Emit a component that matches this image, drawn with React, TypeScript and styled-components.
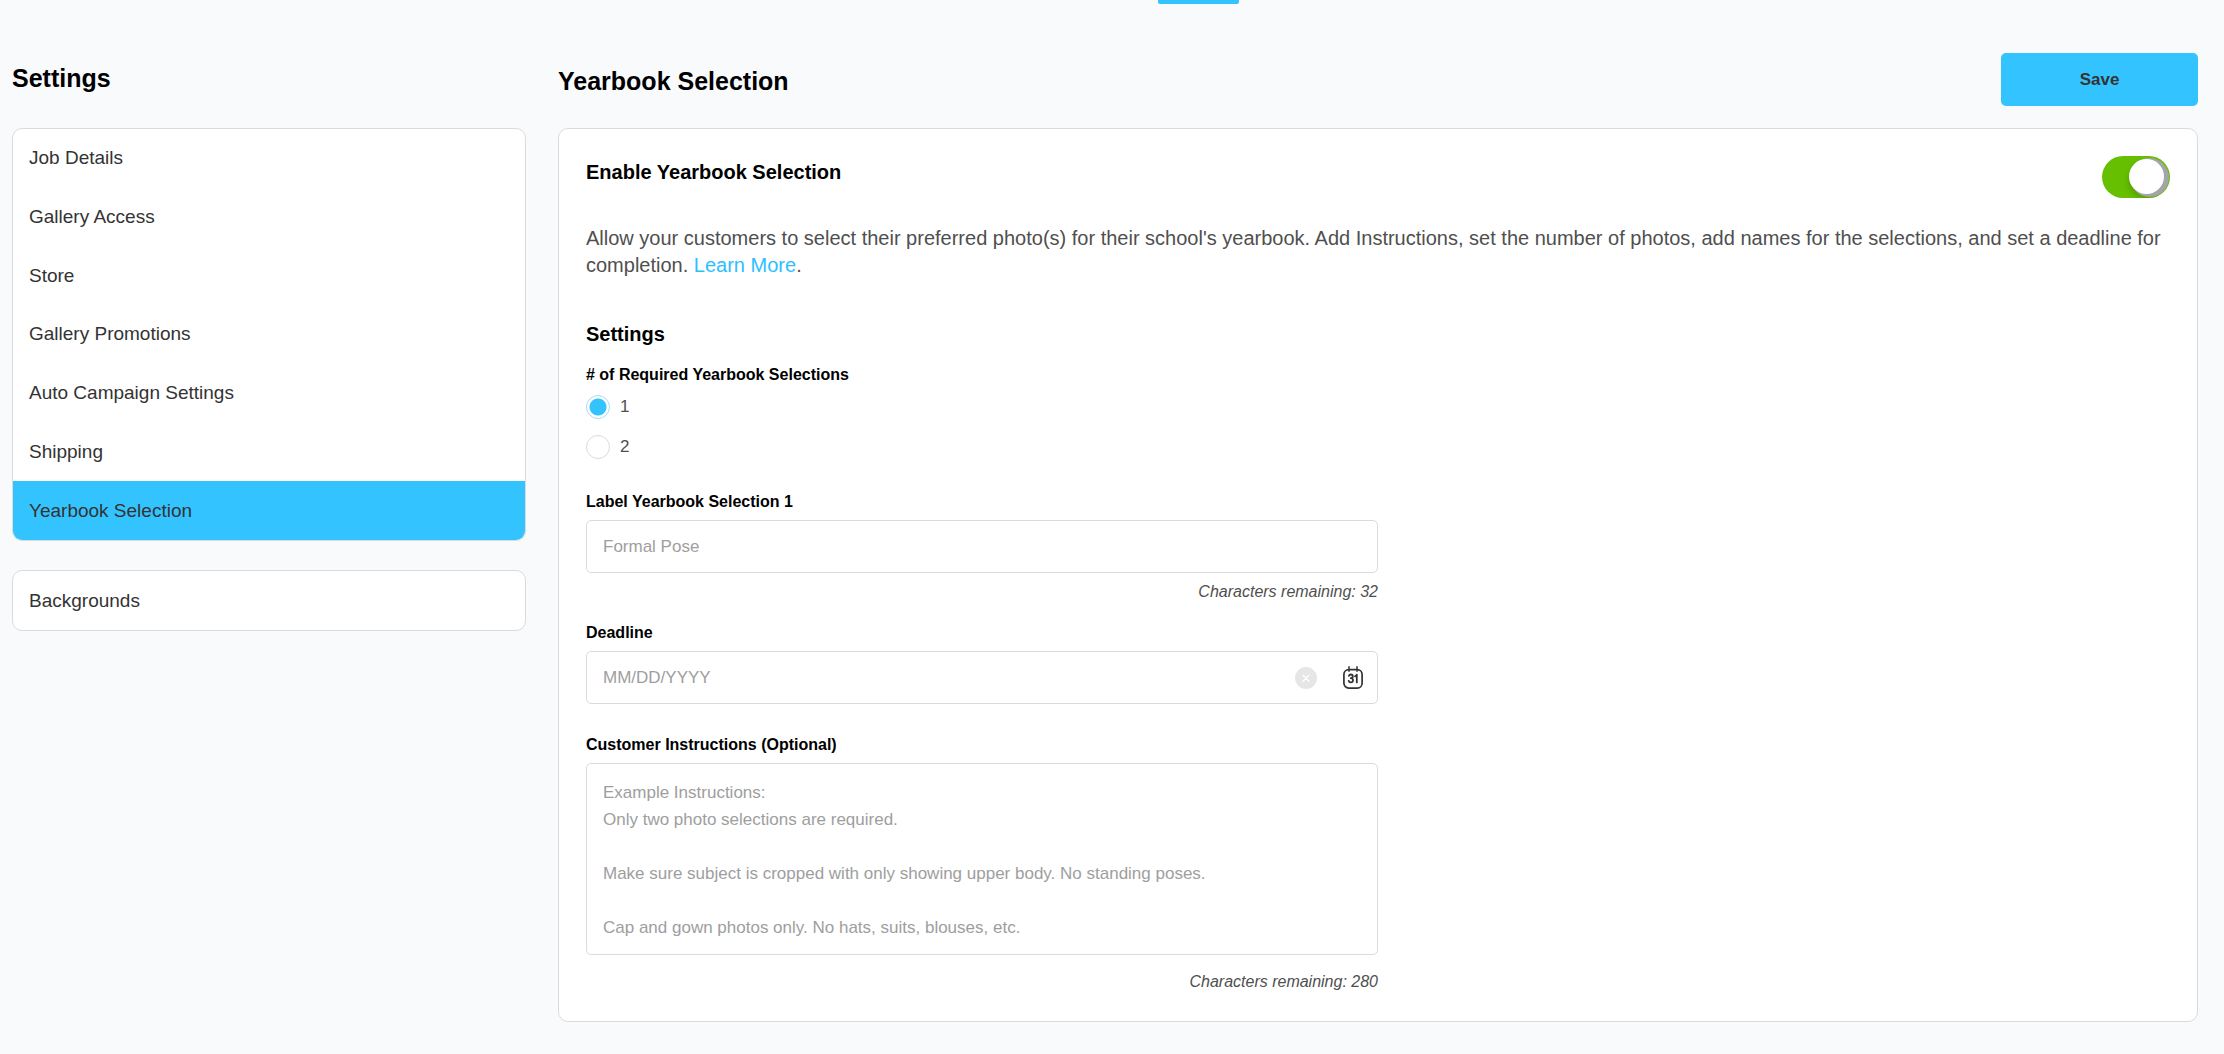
import React, { useState } from 'react';
import styled, { createGlobalStyle } from 'styled-components';

const color = {
  page: '#f9fafc',
  surface: '#ffffff',
  border: '#d9dbdd',
  accent: '#33c4ff',
  ink: '#000000',
  text: '#333333',
  body: '#4f4f4f',
  muted: '#9e9e9e',
  on: '#66bf00',
};

const GlobalStyle = createGlobalStyle`
  *, *::before, *::after { box-sizing: border-box; }
  body {
    margin: 0;
    background: ${color.page};
    color: ${color.text};
    font-family: "Liberation Sans", Arial, Helvetica, sans-serif;
    font-size: 16px;
    line-height: 24px;
  }
  button, input, textarea { font: inherit; color: inherit; }
  h1, h2, h3, p, ul, fieldset, legend { margin: 0; padding: 0; }
`;

const TabStrip = styled.div`
  height: 4px;
  padding-left: calc(50% + 46px);
`;

const ActiveTab = styled.div`
  width: 81px;
  height: 4px;
  border-radius: 0 0 2px 2px;
  background: ${color.accent};
`;

const Page = styled.div`
  display: grid;
  grid-template-columns: minmax(0, 257fr) minmax(0, 820fr);
  column-gap: 32px;
  align-items: start;
  padding: 49px 26px 32px 12px;
`;

const Header = styled.header`
  display: flex;
  align-items: flex-start;
  justify-content: space-between;
  height: 75px;
`;

const Title = styled.h1<{ $line: number }>`
  font-size: 25px;
  line-height: ${(p) => p.$line}px;
  font-weight: 700;
  color: ${color.ink};
`;

const SaveButton = styled.button`
  width: 197px;
  height: 53px;
  border: 0;
  border-radius: 5px;
  background: ${color.accent};
  font-size: 17px;
  font-weight: 700;
  cursor: pointer;
`;

const NavGroups = styled.nav`
  display: grid;
  gap: 29px;
`;

const NavList = styled.ul<{ $min?: number }>`
  display: grid;
  grid-auto-rows: 1fr;
  min-height: ${(p) => p.$min ?? 61}px;
  list-style: none;
  overflow: hidden;
  border: 1px solid ${color.border};
  border-radius: 10px;
  background: ${color.surface};
`;

const NavLink = styled.a<{ $active?: boolean }>`
  display: flex;
  align-items: center;
  height: 100%;
  padding: 0 16px;
  font-size: 19px;
  color: ${color.text};
  text-decoration: none;
  background: ${(p) => (p.$active ? color.accent : 'transparent')};
`;

const Card = styled.section`
  padding: 27px;
  border: 1px solid ${color.border};
  border-radius: 10px;
  background: ${color.surface};
`;

const EnableRow = styled.div`
  display: flex;
  align-items: flex-start;
  justify-content: space-between;
`;

const SectionTitle = styled.h2`
  font-size: 20px;
  line-height: 32px;
  font-weight: 700;
  color: ${color.ink};
`;

const Toggle = styled.input`
  appearance: none;
  display: flex;
  align-items: flex-start;
  width: 68px;
  height: 42px;
  margin: 0;
  padding: 3px;
  overflow: hidden;
  border-radius: 21px;
  background: #b5b5b5;
  cursor: pointer;

  &::before {
    content: '';
    width: 35px;
    height: 35px;
    border-radius: 50%;
    background: #fff;
    box-shadow: 3px 1px 0 2px #a3a5a6, 0 4px 6px rgba(0, 0, 0, 0.2);
  }

  &:checked {
    background: ${color.on};
  }

  &:checked::before {
    margin-left: 24px;
  }
`;

const Intro = styled.p`
  margin: 27px 0 39px;
  font-size: 20px;
  line-height: 27px;
  color: ${color.body};
`;

const InlineLink = styled.a`
  color: #2cc0ff;
  text-decoration: none;
`;

const Form = styled.form`
  width: 50%;
`;

const Choices = styled.fieldset`
  min-width: 0;
  margin-top: 13px;
  border: 0;
`;

const Legend = styled.legend`
  margin-bottom: 8px;
  font-weight: 700;
  color: ${color.ink};
`;

const ChoiceList = styled.div`
  display: grid;
  gap: 16px;
`;

const Choice = styled.label`
  display: flex;
  align-items: center;
  gap: 10px;
  font-size: 17px;
  color: ${color.body};
`;

const Radio = styled.input`
  appearance: none;
  width: 24px;
  height: 24px;
  margin: 0;
  border: 1px solid ${color.border};
  border-radius: 50%;
  background: #fff;

  &:checked {
    border-color: #a5dcf5;
    background: radial-gradient(circle, ${color.accent} 8px, #fff 9px);
  }
`;

const Field = styled.div<{ $gap: number }>`
  display: flex;
  flex-direction: column;
  margin-top: ${(p) => p.$gap}px;
`;

const FieldLabel = styled.label`
  margin-bottom: 6px;
  font-weight: 700;
  color: ${color.ink};
`;

const Control = styled.div`
  display: flex;
  align-items: center;
  height: 53px;
  padding-right: 14px;
  border: 1px solid ${color.border};
  border-radius: 5px;
  background: #fff;
`;

const TextInput = styled.input`
  flex: 1;
  min-width: 0;
  height: 100%;
  padding: 0 16px;
  border: 0;
  outline: 0;
  background: transparent;
  font-size: 17px;

  &::placeholder { color: ${color.muted}; opacity: 1; }
`;

const TextArea = styled.textarea`
  display: block;
  height: 192px;
  padding: 15px 16px;
  border: 1px solid ${color.border};
  border-radius: 5px;
  outline: 0;
  resize: none;
  overflow: hidden;
  background: #fff;
  font-size: 17px;
  line-height: 27px;

  &::placeholder { color: ${color.muted}; opacity: 1; }
`;

const Remaining = styled.p<{ $gap: number }>`
  margin-top: ${(p) => p.$gap}px;
  text-align: right;
  font-style: italic;
  color: ${color.body};
`;

const IconButton = styled.button`
  display: flex;
  padding: 0;
  border: 0;
  background: none;
  cursor: pointer;
`;

const IconGroup = styled.div`
  display: flex;
  align-items: center;
  gap: 26px;
`;

const ClearIcon = () => (
  <svg width="22" height="22" viewBox="0 0 22 22" aria-hidden="true">
    <circle cx="11" cy="11" r="11" fill="#e6e6e6" />
    <path d="M8 8.2l6 6M14 8.2l-6 6" stroke="#fff" strokeWidth="1.3" strokeLinecap="round" />
  </svg>
);

const CalendarIcon = () => (
  <svg width="20" height="23" viewBox="0 0 20 23" fill="none" stroke="#333" strokeLinecap="round" strokeLinejoin="round" aria-hidden="true">
    <rect x="0.9" y="3.6" width="18.2" height="18.5" rx="4.8" strokeWidth="1.7" />
    <path d="M6 0.8v4.4M14 0.8v4.4" strokeWidth="1.5" />
    <path d="M5.9 9.9c.3-.9 1-1.4 1.9-1.4 1.2 0 2 .7 2 1.8s-.8 1.9-2 1.9c1.3 0 2.2.8 2.2 2.1s-.9 2.1-2.2 2.1c-1.1 0-1.9-.6-2.1-1.6" strokeWidth="1.8" />
    <path d="M12 10.3c.9-.2 1.5-.8 1.8-1.7V16.4" strokeWidth="1.8" />
  </svg>
);

const navItems = [
  'Job Details',
  'Gallery Access',
  'Store',
  'Gallery Promotions',
  'Auto Campaign Settings',
  'Shipping',
  'Yearbook Selection',
];

const instructions = [
  'Example Instructions:',
  'Only two photo selections are required.',
  '',
  'Make sure subject is cropped with only showing upper body. No standing poses.',
  '',
  'Cap and gown photos only. No hats, suits, blouses, etc.',
].join('\n');

export default function App() {
  const [enabled, setEnabled] = useState(true);
  const [count, setCount] = useState(1);
  const [label, setLabel] = useState('');
  const [deadline, setDeadline] = useState('');
  const [notes, setNotes] = useState('');

  return (
    <>
      <GlobalStyle />
      <TabStrip>
        <ActiveTab />
      </TabStrip>
      <Page>
        <aside>
          <Header>
            <Title $line={50}>Settings</Title>
          </Header>
          <NavGroups aria-label="Settings">
            <NavList $min={413}>
              {navItems.map((item) => (
                <li key={item}>
                  <NavLink href="#" $active={item === 'Yearbook Selection'}>
                    {item}
                  </NavLink>
                </li>
              ))}
            </NavList>
            <NavList>
              <li>
                <NavLink href="#">Backgrounds</NavLink>
              </li>
            </NavList>
          </NavGroups>
        </aside>

        <main>
          <Header>
            <Title $line={56}>Yearbook Selection</Title>
            <SaveButton type="submit" form="yearbook">Save</SaveButton>
          </Header>
          <Card>
            <EnableRow>
              <SectionTitle as="label" htmlFor="enable">Enable Yearbook Selection</SectionTitle>
              <Toggle
                id="enable"
                type="checkbox"
                role="switch"
                checked={enabled}
                onChange={(e) => setEnabled(e.target.checked)}
              />
            </EnableRow>
            <Intro>
              Allow your customers to select their preferred photo(s) for their school's yearbook. Add Instructions,
              set the number of photos, add names for the selections, and set a deadline for completion.{' '}
              <InlineLink href="#">Learn More</InlineLink>.
            </Intro>

            <Form id="yearbook" onSubmit={(e) => e.preventDefault()}>
              <SectionTitle>Settings</SectionTitle>
              <Choices>
                <Legend># of Required Yearbook Selections</Legend>
                <ChoiceList>
                  {[1, 2].map((n) => (
                    <Choice key={n}>
                      <Radio type="radio" name="count" checked={count === n} onChange={() => setCount(n)} />
                      {n}
                    </Choice>
                  ))}
                </ChoiceList>
              </Choices>

              <Field $gap={31}>
                <FieldLabel htmlFor="label">Label Yearbook Selection 1</FieldLabel>
                <Control>
                  <TextInput
                    id="label"
                    maxLength={32}
                    placeholder="Formal Pose"
                    value={label}
                    onChange={(e) => setLabel(e.target.value)}
                  />
                </Control>
                <Remaining $gap={7}>Characters remaining: {32 - label.length}</Remaining>
              </Field>

              <Field $gap={17}>
                <FieldLabel htmlFor="deadline">Deadline</FieldLabel>
                <Control>
                  <TextInput
                    id="deadline"
                    placeholder="MM/DD/YYYY"
                    value={deadline}
                    onChange={(e) => setDeadline(e.target.value)}
                  />
                  <IconGroup>
                    <IconButton type="button" aria-label="Clear deadline" onClick={() => setDeadline('')}>
                      <ClearIcon />
                    </IconButton>
                    <IconButton type="button" aria-label="Open calendar">
                      <CalendarIcon />
                    </IconButton>
                  </IconGroup>
                </Control>
              </Field>

              <Field $gap={29}>
                <FieldLabel htmlFor="notes">Customer Instructions (Optional)</FieldLabel>
                <TextArea
                  id="notes"
                  maxLength={280}
                  placeholder={instructions}
                  value={notes}
                  onChange={(e) => setNotes(e.target.value)}
                />
                <Remaining $gap={15}>Characters remaining: {280 - notes.length}</Remaining>
              </Field>
            </Form>
          </Card>
        </main>
      </Page>
    </>
  );
}
